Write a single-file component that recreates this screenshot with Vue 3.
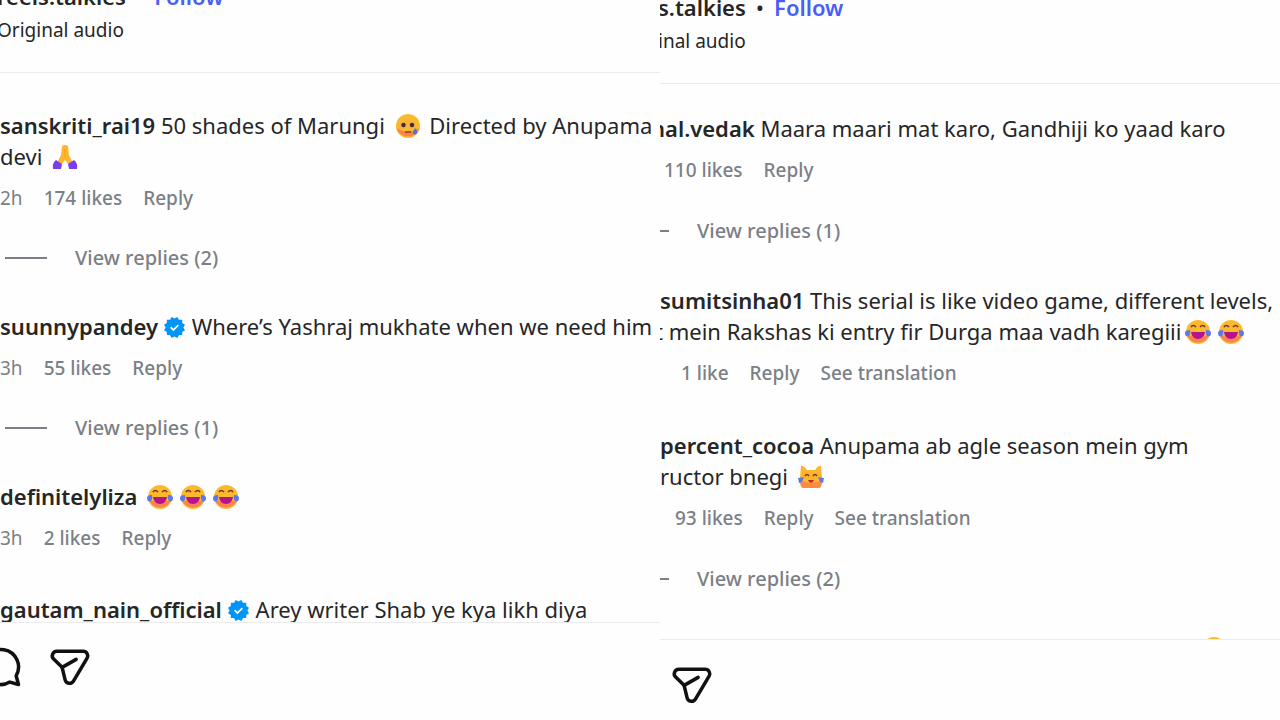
<script setup>
import { h } from 'vue'

const panes = [
  {
    side: 'left',
    account: 'reels.talkies',
    audio: 'Original audio',
    showComment: true,
    comments: [
      {
        user: 'sanskriti_rai19',
        lines: [
          ['50 shades of Marungi ', { e: 'tear' }, ' Directed by Anupama'],
          ['devi ', { e: 'pray' }]
        ],
        time: '2h',
        meta: ['174 likes', 'Reply'],
        replies: 2
      },
      {
        user: 'suunnypandey',
        verified: true,
        lines: [['Where’s Yashraj mukhate when we need him']],
        time: '3h',
        meta: ['55 likes', 'Reply'],
        replies: 1
      },
      {
        user: 'definitelyliza',
        lines: [[{ e: 'joy' }, { e: 'joy' }, { e: 'joy' }]],
        time: '3h',
        meta: ['2 likes', 'Reply']
      },
      {
        user: 'gautam_nain_official',
        verified: true,
        lines: [['Arey writer Shab ye kya likh diya']]
      }
    ]
  },
  {
    side: 'right',
    account: 's.talkies',
    audio: 'inal audio',
    showComment: false,
    comments: [
      {
        user: 'nal.vedak',
        cut: 'cut-name',
        lines: [['Maara maari mat karo, Gandhiji ko yaad karo']],
        meta: ['110 likes', 'Reply'],
        indent: 'indent-s',
        replies: 1
      },
      {
        user: 'sumitsinha01',
        lines: [
          ['This serial is like video game, different levels,'],
          ['t mein Rakshas ki entry fir Durga maa vadh karegiii', { e: 'joy' }, { e: 'joy' }]
        ],
        cut: 'cut-second',
        meta: ['1 like', 'Reply', 'See translation'],
        indent: 'indent-l'
      },
      {
        user: 'percent_cocoa',
        lines: [['Anupama ab agle season mein gym'], ['ructor bnegi ', { e: 'cat' }]],
        meta: ['93 likes', 'Reply', 'See translation'],
        indent: 'indent-m',
        replies: 2
      },
      { cut: 'tail', lines: [[{ e: 'joy' }]] }
    ]
  }
]

const face = [
  h('circle', { cx: 13, cy: 13, r: 12, fill: '#fdb92e' }),
  h('path', { d: 'M1.5 15a12 12 0 0 0 23 0Q13 22 1.5 15', fill: '#f8705a', opacity: 0.75 })
]
const drops = [
  h('path', { d: 'M0 14q0-3 5-3 1 5-2 6.500-3 0-3-3.500', fill: '#5d78e8' }),
  h('path', { d: 'M26 14q0-3-5-3-1 5 2 6.500 3 0 3-3.500', fill: '#5d78e8' })
]
const shapes = {
  joy: () => [
    ...face,
    h('path', { d: 'M6 8q2-3 5 0M15 8q3-3 5 0', fill: 'none', stroke: '#6b3a20', 'stroke-width': 1.6 }),
    h('path', { d: 'M6 13h14q-1 7-7 7t-7-7', fill: '#b4148c' }),
    ...drops
  ],
  tear: () => [
    ...face,
    h('circle', { cx: 8.5, cy: 12, r: 3.4, fill: '#e8ae5c' }),
    h('circle', { cx: 17, cy: 12, r: 3.4, fill: '#e8ae5c' }),
    h('circle', { cx: 8.5, cy: 12, r: 2.2, fill: '#4a2b2b' }),
    h('circle', { cx: 17, cy: 12, r: 2.2, fill: '#4a2b2b' }),
    h('path', { d: 'M10 19h6', fill: 'none', stroke: '#8a4b1e', 'stroke-width': 1.6 }),
    h('path', { d: 'M20 15q3 3 2 5-2 3-4 0 0-2 2-5', fill: '#4f6fe6' })
  ],
  pray: () => [
    h('path', { d: 'M10 2q3-2 6 0l1 9 4 8-5 1-3-4-3 4-5-1 4-8Z', fill: '#fdb62f' }),
    h('path', { d: 'M13 5v9', stroke: '#f3a029', 'stroke-width': 1 }),
    h('path', { d: 'M4 16l6 4-1 5H1q-1-6 3-9M22 16l-6 4 1 5h8q1-6-3-9', fill: '#7b3df0' })
  ],
  cat: () => [
    h('path', { d: 'M3 2q2-1 6 4h8q4-5 6-4l1 12q0 9-3 10H5q-3-1-3-10Z', fill: '#fdb52f' }),
    h('path', { d: 'M2 16q11 6 22 0 0 7-3 8H5q-3-1-3-8', fill: '#fb8a44' }),
    h('path', { d: 'M7 12q2-3 4 0M15 12q2-3 4 0', fill: 'none', stroke: '#6b3a20', 'stroke-width': 1.5 }),
    h('path', { d: 'M10 16h6q-1 3-3 3t-3-3', fill: '#c62c30' }),
    h('path', { d: 'M0 14l6-1-2 5-3 1ZM26 14l-6-1 2 5 3 1Z', fill: '#5d78e8' })
  ]
}
const Emoji = (props) => h('svg', { viewBox: '0 0 26 26', 'aria-hidden': 'true' }, shapes[props.name]())
Emoji.props = ['name']
</script>

<template>
  <main class="board">
    <section v-for="pane in panes" :key="pane.side" class="pane" :class="pane.side">
      <header class="head">
        <div class="account">
          <a href="#" class="user">{{ pane.account }}</a>
          <span class="dot">•</span>
          <button type="button" class="follow">Follow</button>
        </div>
        <a href="#" class="audio">{{ pane.audio }}</a>
      </header>

      <div class="list">
        <article v-for="(c, i) in pane.comments" :key="i" class="comment" :class="[c.cut, { plain: !c.replies }]">
          <p v-for="(line, n) in c.lines" :key="n" class="line">
            <template v-if="n === 0 && c.user"><a href="#" class="user">{{ c.user }}</a>{{ ' ' }}<svg
              v-if="c.verified" class="badge" viewBox="0 0 40 40" role="img" aria-label="Verified"><path fill="#0095f6" d="M19.998 3.094 14.638 0l-2.972 5.150H5.432v6.354L0 14.640 3.094 20 0 25.359l5.432 3.137v5.905h5.975L14.638 40l5.360-3.094L25.358 40l3.232-5.600h6.162v-6.010L40 25.359 36.905 20 40 14.641l-5.248-3.030v-6.460h-6.419L25.358 0l-5.360 3.094Z" /><path fill="#fff" d="m17.800 27-6.300-6.300 2.400-2.400 4 4 8.200-8.100 2.300 2.400Z" /></svg></template><template
              v-for="(part, k) in line" :key="k"><Emoji v-if="part.e" class="emoji" :name="part.e" /><template v-else>{{ part }}</template></template>
          </p>
          <div v-if="c.meta" class="meta" :class="c.indent">
            <time v-if="c.time">{{ c.time }}</time>
            <button v-for="m in c.meta" :key="m" type="button">{{ m }}</button>
          </div>
          <button v-if="c.replies" type="button" class="replies">
            <span class="rule"></span>View replies ({{ c.replies }})
          </button>
        </article>
      </div>

      <footer class="actions">
        <button v-if="pane.showComment" type="button" aria-label="Comment">
          <svg viewBox="0 0 24 24"><path d="M20.656 17.008a9.993 9.993 0 1 0-3.590 3.615L22 22Z" /></svg>
        </button>
        <button type="button" aria-label="Share">
          <svg viewBox="0 0 24 24"><path d="M13.973 20.046 21.770 6.928C22.800 5.195 21.550 3 19.535 3H4.466C2.138 3 .984 5.825 2.646 7.456l4.842 4.752 1.723 7.121c.548 2.266 3.571 2.721 4.762.717Z" /><path d="M7.488 12.208 15.515 7.641" /></svg>
        </button>
      </footer>
    </section>
  </main>
</template>

<style>
body {
  margin: 0;
  background: #fff;
}
</style>

<style scoped>
.board {
  display: grid;
  grid-template-columns: 33fr 31fr;
  height: 100vh;
  overflow: hidden;
  background: #fefefe;
  color: #262626;
  font-family: "Noto Sans", "Open Sans", sans-serif;
  font-size: 22px;
  line-height: 31px;
}
.pane {
  display: flex;
  flex-direction: column;
  min-width: 0;
  overflow: hidden;
  white-space: nowrap;
}
button {
  padding: 0;
  border: 0;
  background: none;
  color: inherit;
  font: inherit;
}
a {
  color: inherit;
  text-decoration: none;
}
.user {
  font-weight: 600;
}
.head {
  display: flex;
  flex-direction: column;
  gap: 3px;
  padding-bottom: 26px;
  border-bottom: 1px solid #ebebeb;
}
.left .head {
  margin-top: -19px;
}
.right .head {
  margin-top: -8px;
}
.account {
  display: flex;
  gap: 10px;
}
.follow {
  color: #4a5df9;
  font-weight: 600;
}
.audio {
  font-size: 19px;
}
.left .account,
.left .audio {
  margin-left: -3px;
}
.right .account,
.right .audio {
  margin-left: -2px;
}
.list {
  flex: 1;
  min-height: 0;
  overflow: hidden;
}
.left .list {
  padding-top: 37px;
}
.right .list {
  padding-top: 29px;
}
.line {
  height: 31px;
  margin: 0;
}
.comment {
  margin-bottom: 38px;
}
.comment.plain {
  margin-bottom: 40px;
}
.right .comment {
  margin-bottom: 39px;
}
.right .comment.plain {
  margin-bottom: 41px;
}
.cut-name .line {
  margin-left: -9px;
}
.cut-second .line + .line {
  margin-left: -5px;
}
.tail {
  padding-right: 50px;
  text-align: right;
}
.badge {
  width: 21px;
  height: 21px;
  margin-right: 7px;
  vertical-align: -3px;
}
.emoji {
  width: 26px;
  height: 26px;
  margin: 0 3px 0 4px;
  vertical-align: -5px;
}
.meta {
  display: flex;
  gap: 21px;
  margin-top: 11px;
  color: #7b7f86;
  font-size: 19px;
}
.meta button,
.replies {
  font-weight: 500;
}
.indent-s {
  padding-left: 4px;
}
.indent-m {
  padding-left: 15px;
}
.indent-l {
  padding-left: 21px;
}
.replies {
  display: flex;
  align-items: center;
  gap: 28px;
  margin-top: 28px;
  padding-left: 5px;
  color: #7b7f86;
  font-size: 20px;
}
.right .replies {
  margin-top: 29px;
  margin-left: -38px;
}
.rule {
  width: 42px;
  height: 2px;
  background: #7b7f86;
}
.actions {
  display: flex;
  gap: 27px;
  padding: 23px 0 32px;
  border-top: 1px solid #ebebeb;
}
.left .actions {
  margin-left: -20px;
}
.right .actions {
  padding: 24px 11px 14px;
}
.actions svg {
  display: block;
  width: 42px;
  height: 42px;
  fill: none;
  stroke: #111;
  stroke-width: 2;
  stroke-linecap: round;
  stroke-linejoin: round;
}
</style>
